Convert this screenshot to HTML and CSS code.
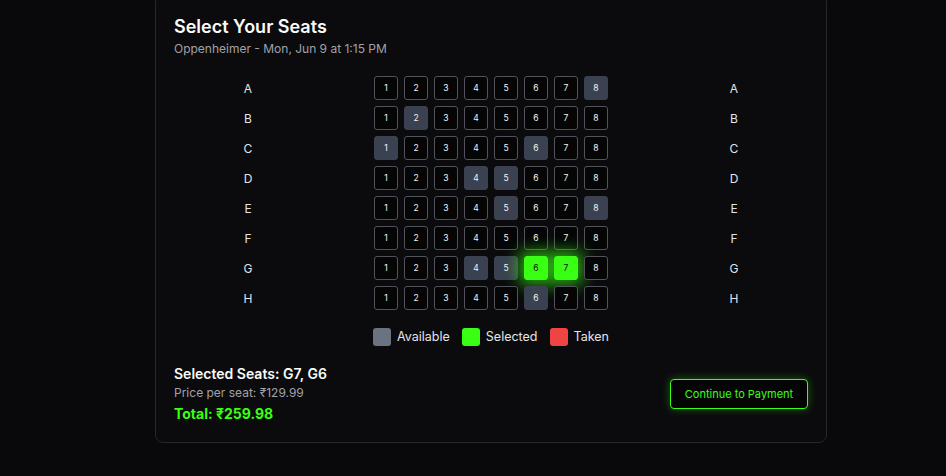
FILE: index.html
```html
<!DOCTYPE html>
<html lang="en">
<head>
<meta charset="utf-8">
<title>Select Your Seats</title>
<link rel="stylesheet" href="styles.css">
</head>
<body>
<div class="page">
  <section class="card">
    <h1 class="title">Select Your Seats</h1>
    <p class="subtitle">Oppenheimer - Mon, Jun 9 at 1:15 PM</p>

    <div class="grid" id="grid"></div>

    <div class="legend">
      <div class="legend-item"><span class="swatch swatch-available"></span>Available</div>
      <div class="legend-item"><span class="swatch swatch-selected"></span>Selected</div>
      <div class="legend-item"><span class="swatch swatch-taken"></span>Taken</div>
    </div>

    <div class="summary">
      <div class="summary-info">
        <div class="summary-seats">Selected Seats: G7, G6</div>
        <div class="summary-price">Price per seat: ₹129.99</div>
        <div class="summary-total">Total: ₹259.98</div>
      </div>
      <button class="pay-btn">Continue to Payment</button>
    </div>
  </section>
</div>
<script>
  var rows = ['A','B','C','D','E','F','G','H'];
  var taken = {A:[8],B:[2],C:[1,6],D:[4,5],E:[5,8],F:[],G:[4,5],H:[6]};
  var selected = {G:[6,7]};
  var grid = document.getElementById('grid');
  rows.forEach(function(r){
    var row = document.createElement('div');
    row.className = 'row';
    var l = document.createElement('div'); l.className='row-label'; l.textContent=r; row.appendChild(l);
    var seats = document.createElement('div'); seats.className='seats';
    for (var i=1;i<=8;i++){
      var s = document.createElement('div');
      var cls = 'seat';
      if ((selected[r]||[]).indexOf(i)>=0) cls += ' seat-selected';
      else if ((taken[r]||[]).indexOf(i)>=0) cls += ' seat-taken';
      s.className = cls; s.textContent = i;
      seats.appendChild(s);
    }
    row.appendChild(seats);
    var rl = document.createElement('div'); rl.className='row-label'; rl.textContent=r; row.appendChild(rl);
    grid.appendChild(row);
  });
</script>
</body>
</html>
```

FILE: styles.css
```css
* { box-sizing: border-box; }
html, body { margin: 0; padding: 0; }
body {
  background: #09090b;
  font-family: Inter, "Noto Sans", sans-serif;
  color: #fafafa;
  width: 946px;
  height: 476px;
  overflow: hidden;
}
.page {
  padding-left: 155px;
}
.card {
  width: 672px;
  margin-top: -6px;
  background: #0b0b0d;
  border: 1px solid #27272a;
  border-radius: 8px;
  padding: 18px 18px 18px 18px;
}
.title {
  margin: 0;
  font-size: 18px;
  line-height: 28px;
  font-weight: 600;
  color: #fafafa;
}
.subtitle {
  margin: 0;
  font-size: 12px;
  line-height: 16px;
  color: #a1a1aa;
}
.grid {
  margin-top: 19px;
  display: flex;
  flex-direction: column;
  gap: 6px;
}
.row {
  display: grid;
  grid-template-columns: 148px 1fr 148px;
  align-items: center;
  height: 24px;
}
.row-label {
  text-align: center;
  font-size: 12px;
  color: #e4e4e7;
}
.seats {
  display: flex;
  justify-content: center;
  gap: 6px;
}
.seat {
  width: 24px;
  height: 24px;
  border: 1px solid #52525b;
  border-radius: 3px;
  background: #050506;
  color: #f4f4f5;
  font-size: 8.5px;
  font-weight: 400;
  display: flex;
  align-items: center;
  justify-content: center;
}
.seat-taken {
  background: #3a4150;
  border-color: #3a4150;
}
.seat-selected {
  background: #39ff14;
  border-color: #39ff14;
  color: #0a0a0a;
  box-shadow: 0 0 16px 5px rgba(57, 255, 20, 0.65);
}
.legend {
  margin-top: 18px;
  display: flex;
  justify-content: center;
  gap: 12px;
}
.legend-item {
  display: flex;
  align-items: center;
  gap: 6px;
  font-size: 12.5px;
  line-height: 18px;
  color: #e4e4e7;
}
.swatch {
  width: 18px;
  height: 18px;
  border-radius: 3px;
  display: inline-block;
}
.swatch-available { background: #6b7280; }
.swatch-selected { background: #39ff14; }
.swatch-taken { background: #ef4444; }
.summary {
  margin-top: 18px;
  display: flex;
  justify-content: space-between;
  align-items: center;
}
.summary-seats {
  font-size: 14px;
  line-height: 20px;
  font-weight: 600;
  color: #fafafa;
}
.summary-price {
  margin-top: 1px;
  font-size: 12px;
  line-height: 16px;
  color: #a1a1aa;
}
.summary-total {
  margin-top: 3px;
  font-size: 14px;
  line-height: 20px;
  font-weight: 700;
  color: #39ff14;
}
.pay-btn {
  width: 138px;
  height: 30px;
  background: #050506;
  border: 1px solid #39ff14;
  border-radius: 4px;
  color: #39ff14;
  font-family: Inter, "Noto Sans", sans-serif;
  font-size: 11px;
  padding: 0;
  box-shadow: 0 0 8px rgba(57, 255, 20, 0.35);
}
```
